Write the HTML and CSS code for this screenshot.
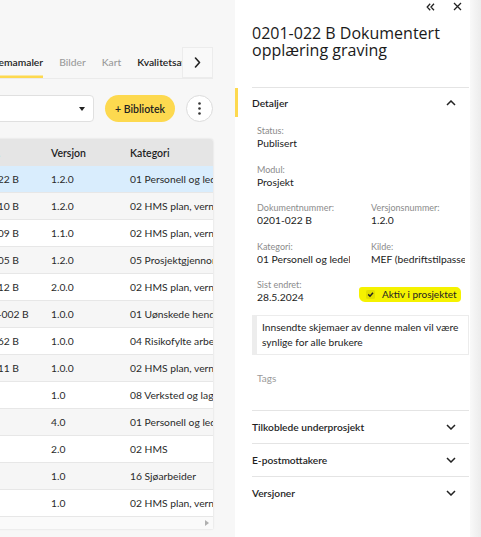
FILE: index.html
```html
<!DOCTYPE html>
<html lang="no">
<head>
<meta charset="utf-8">
<title>Skjemamaler</title>
<link rel="stylesheet" href="styles.css">
</head>
<body>
<div class="app">
  <main class="main">
    <div class="tabs">
      <div class="tab-list">
        <div class="tab active">Skjemamaler</div>
        <div class="tab muted">Bilder</div>
        <div class="tab muted">Kart</div>
        <div class="tab">Kvalitetsavvik</div>
      </div>
      <button class="tab-next" aria-label="Neste">
        <svg width="7" height="11" viewBox="0 0 7 11"><path d="M1.5 1 L5.5 5.5 L1.5 10" fill="none" stroke="#222" stroke-width="1.6" stroke-linecap="round" stroke-linejoin="round"/></svg>
      </button>
    </div>

    <div class="toolbar">
      <div class="select"><span class="caret"></span></div>
      <button class="btn-yellow">+ Bibliotek</button>
      <button class="btn-kebab" aria-label="Mer">
        <svg width="3" height="13" viewBox="0 0 3 13"><circle cx="1.5" cy="1.5" r="1.3" fill="#333"/><circle cx="1.5" cy="6.5" r="1.3" fill="#333"/><circle cx="1.5" cy="11.5" r="1.3" fill="#333"/></svg>
      </button>
    </div>

    <div class="table">
      <div class="row head"><div class="cell">Dok. nr.</div><div class="cell">Versjon</div><div class="cell">Kategori</div></div>
      <div class="row sel"><div class="cell">0201-022 B</div><div class="cell">1.2.0</div><div class="cell">01 Personell og ledelse</div></div>
      <div class="row alt"><div class="cell">0201-010 B</div><div class="cell">1.2.0</div><div class="cell">02 HMS plan, verneombud</div></div>
      <div class="row"><div class="cell">0201-009 B</div><div class="cell">1.1.0</div><div class="cell">02 HMS plan, verneombud</div></div>
      <div class="row alt"><div class="cell">0201-005 B</div><div class="cell">1.2.0</div><div class="cell">05 Prosjektgjennomføring</div></div>
      <div class="row"><div class="cell">0201-012 B</div><div class="cell">2.0.0</div><div class="cell">02 HMS plan, verneombud</div></div>
      <div class="row alt"><div class="cell">0600-1-002 B</div><div class="cell">1.0.0</div><div class="cell">01 Uønskede hendelser</div></div>
      <div class="row"><div class="cell">0201-062 B</div><div class="cell">1.0.0</div><div class="cell">04 Risikofylte arbeider</div></div>
      <div class="row alt"><div class="cell">0201-011 B</div><div class="cell">1.0.0</div><div class="cell">02 HMS plan, verneombud</div></div>
      <div class="row"><div class="cell"></div><div class="cell">1.0</div><div class="cell">08 Verksted og lager</div></div>
      <div class="row alt"><div class="cell"></div><div class="cell">4.0</div><div class="cell">01 Personell og ledelse</div></div>
      <div class="row"><div class="cell"></div><div class="cell">2.0</div><div class="cell">02 HMS</div></div>
      <div class="row alt"><div class="cell"></div><div class="cell">1.0</div><div class="cell">16 Sjøarbeider</div></div>
      <div class="row"><div class="cell"></div><div class="cell">1.0</div><div class="cell">02 HMS plan, verneombud</div></div>
      <div class="hscroll"><span class="scroll-arrow"></span></div>
    </div>
  </main>

  <aside class="panel">
    <div class="panel-top">
      <svg class="ico" width="9" height="8" viewBox="0 0 9 8"><path d="M4.2 0.8 L1.2 4 L4.2 7.2 M8 0.8 L5 4 L8 7.2" fill="none" stroke="#222" stroke-width="1.3"/></svg>
      <svg class="ico close" width="9" height="9" viewBox="0 0 9 9"><path d="M1 1 L8 8 M8 1 L1 8" fill="none" stroke="#222" stroke-width="1.3"/></svg>
    </div>
    <h1 class="title">0201-022 B Dokumentert opplæring graving</h1>

    <section class="acc">
      <div class="acc-head active">
        <span>Detaljer</span>
        <svg width="10" height="6" viewBox="0 0 10 6"><path d="M1 5 L5 1 L9 5" fill="none" stroke="#222" stroke-width="1.5"/></svg>
      </div>
      <div class="fields">
        <div class="field wide"><div class="label">Status:</div><div class="value">Publisert</div></div>
        <div class="field wide"><div class="label">Modul:</div><div class="value">Prosjekt</div></div>
        <div class="field"><div class="label">Dokumentnummer:</div><div class="value">0201-022 B</div></div>
        <div class="field"><div class="label">Versjonsnummer:</div><div class="value">1.2.0</div></div>
        <div class="field"><div class="label">Kategori:</div><div class="value">01 Personell og ledelse</div></div>
        <div class="field"><div class="label">Kilde:</div><div class="value">MEF (bedriftstilpasset)</div></div>
        <div class="field"><div class="label">Sist endret:</div><div class="value">28.5.2024</div></div>
        <div class="field check-cell">
          <span class="marker">
            <svg width="9" height="9" viewBox="0 0 9 9"><rect x="0" y="0" width="9" height="9" rx="1.5" fill="rgba(0,0,0,0.07)"/><path d="M2.2 4.4 L4 6.2 L7 2.8" fill="none" stroke="#222" stroke-width="1.5"/></svg>
            <span>Aktiv i prosjektet</span>
          </span>
        </div>
      </div>
      <div class="note">Innsendte skjemaer av denne malen vil være synlige for alle brukere</div>
      <div class="tags">Tags</div>
    </section>

    <section class="acc closed first">
      <div class="acc-head"><span>Tilkoblede underprosjekt</span>
        <svg width="10" height="6" viewBox="0 0 10 6"><path d="M1 1 L5 5 L9 1" fill="none" stroke="#222" stroke-width="1.5"/></svg></div>
    </section>
    <section class="acc closed">
      <div class="acc-head"><span>E-postmottakere</span>
        <svg width="10" height="6" viewBox="0 0 10 6"><path d="M1 1 L5 5 L9 1" fill="none" stroke="#222" stroke-width="1.5"/></svg></div>
    </section>
    <section class="acc closed">
      <div class="acc-head"><span>Versjoner</span>
        <svg width="10" height="6" viewBox="0 0 10 6"><path d="M1 1 L5 5 L9 1" fill="none" stroke="#222" stroke-width="1.5"/></svg></div>
    </section>
  </aside>
  <div class="edge"></div>
</div>
</body>
</html>
```

FILE: styles.css
```css
* { box-sizing: border-box; }
html, body { margin: 0; padding: 0; }
body {
  width: 481px;
  height: 537px;
  overflow: hidden;
  font-family: Lato, "Liberation Sans", sans-serif;
  color: #222;
  background: #f7f7f7;
}
button { font-family: inherit; }
.app { display: flex; height: 537px; }

/* left main area */
.main {
  width: 235px;
  flex: none;
  overflow: hidden;
  padding-top: 47px;
  background: #f7f7f7;
}
.tabs {
  display: flex;
  width: 213px;
  height: 32px;
  border-bottom: 1px solid #ebebeb;
}
.tab-list {
  flex: 1;
  display: flex;
  gap: 16px;
  overflow: hidden;
  margin-left: -15px;
}
.tab {
  height: 31px;
  line-height: 31px;
  font-size: 10.3px;
  font-weight: 600;
  white-space: nowrap;
  color: #1e1e1e;
}
.tab.active { box-shadow: inset 0 -2.5px #fdd94f; }
.tab.muted { color: #9b9b9b; font-weight: 500; }
.tab-next {
  width: 31px;
  height: 31px;
  flex: none;
  padding: 0;
  border: 1px solid #ececec;
  background: #f9f9f9;
  display: flex;
  align-items: center;
  justify-content: center;
}

.toolbar {
  display: flex;
  align-items: center;
  gap: 11px;
  width: 213px;
  height: 27px;
  margin-top: 16px;
}
.select {
  width: 120px;
  height: 27px;
  flex: none;
  margin-left: -26px;
  background: #fff;
  border: 1px solid #e0e0e0;
  border-radius: 4px;
  display: flex;
  align-items: center;
  justify-content: flex-end;
  padding-right: 8px;
}
.caret {
  width: 0; height: 0;
  border-left: 3.5px solid transparent;
  border-right: 3.5px solid transparent;
  border-top: 4px solid #222;
}
.btn-yellow {
  width: 70px;
  height: 27px;
  flex: none;
  border: none;
  border-radius: 14px;
  background: #fdd94f;
  color: #222;
  font-size: 10.5px;
  font-weight: 600;
  padding: 0;
}
.btn-kebab {
  width: 27px;
  height: 27px;
  flex: none;
  border-radius: 50%;
  border: 1px solid #dcdcdc;
  background: #fff;
  padding: 0;
  display: flex;
  align-items: center;
  justify-content: center;
}

.table {
  margin-top: 17px;
  margin-left: -44px;
  width: 257px;
  background: #fff;
  border-radius: 0 3px 0 0;
  box-shadow: 0 0 2px rgba(0, 0, 0, 0.15);
  overflow: hidden;
}
.row {
  display: grid;
  grid-template-columns: 87px 79px 1fr;
  align-items: center;
  height: 27px;
  border-bottom: 1px solid #e7e7e7;
  font-size: 10.3px;
  color: #2a2a2a;
  background: #fff;
}
.row.head { background: #e5e5e5; font-weight: 600; color: #1e1e1e; border-bottom: none; font-size: 10.5px; }
.row.alt { background: #f6f6f6; }
.row.sel { background: #d9edfd; }
.cell {
  padding-left: 8px;
  white-space: nowrap;
  overflow: hidden;
}
.hscroll {
  height: 12px;
  background: #fafafa;
  display: flex;
  align-items: center;
  justify-content: flex-end;
  padding-right: 4px;
}
.scroll-arrow {
  width: 0; height: 0;
  border-top: 3px solid transparent;
  border-bottom: 3px solid transparent;
  border-left: 4px solid #b0b0b0;
}

/* right panel */
.panel {
  width: 235px;
  flex: none;
  background: #fff;
  padding: 0 1px 0 17px;
}
.edge {
  flex: 1;
  background: linear-gradient(to right, #f9f9f9, #ececec);
}
.panel-top {
  height: 12px;
  padding-top: 1px;
  display: flex;
  justify-content: flex-end;
  align-items: center;
  gap: 18px;
  padding-right: 7px;
}
.title {
  margin: 12.5px 0 28.5px;
  font-family: "Open Sans", "Liberation Sans", sans-serif;
  font-size: 16px;
  line-height: 17px;
  font-weight: 400;
  color: #1a1a1a;
}
.acc { border-top: 1px solid #e4e4e4; }
.acc-head {
  position: relative;
  height: 30px;
  display: flex;
  align-items: center;
  justify-content: space-between;
  padding-right: 13px;
  font-size: 10.2px;
  font-weight: 600;
  color: #1e1e1e;
}
.acc-head.active::before {
  content: "";
  position: absolute;
  left: -17px;
  top: 0;
  width: 3px;
  height: 29px;
  background: #fdd94f;
}
.acc.closed .acc-head { height: 32px; }
.acc.first { margin-top: 25px; }

.fields {
  display: grid;
  grid-template-columns: 93px 1fr;
  column-gap: 21px;
  row-gap: 13.5px;
  padding: 0 4px 0 5px;
  margin-top: 7px;
}
.field { min-width: 0; }
.field.wide { grid-column: 1 / -1; }
.label {
  font-size: 9px;
  line-height: 12px;
  color: #8b8b8b;
  white-space: nowrap;
}
.value {
  font-size: 10.3px;
  line-height: 13px;
  color: #222;
  white-space: nowrap;
  overflow: hidden;
}
.check-cell { align-self: center; padding-top: 1px; }
.marker {
  display: inline-flex;
  align-items: center;
  gap: 7px;
  margin-left: -12px;
  padding: 1px 4px 1px 7px;
  height: 15px;
  background: #f5f200;
  border-radius: 3px 5px 4px 6px;
  font-size: 10px;
  color: #222;
  white-space: nowrap;
}
.note {
  margin-top: 11px;
  border: 1px solid #ececec;
  border-left: 5px solid #ededed;
  padding: 4px 8px 4px 5px;
  font-size: 10.2px;
  line-height: 15px;
  color: #222;
}
.tags {
  margin-top: 17px;
  padding-left: 5px;
  font-size: 10px;
  line-height: 13px;
  color: #9a9a9a;
}
```
